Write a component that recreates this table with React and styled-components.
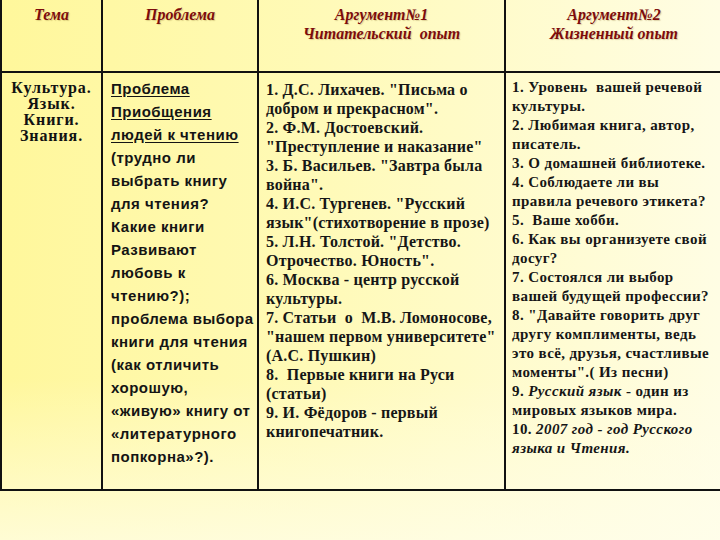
import React from 'react';
import styled, { createGlobalStyle } from 'styled-components';

const GlobalStyle = createGlobalStyle`
    html, body {
        margin: 0;
        padding: 0;
    }
    body {
        width: 720px;
        height: 540px;
        overflow: hidden;
        background:
            linear-gradient(to bottom, rgba(255, 255, 240, 0) 0%, rgba(255, 255, 240, 0) 70%, rgba(255, 254, 236, 0.7) 100%),
            linear-gradient(to right, #fff79b 0%, #fffab8 45%, #fffde4 100%);
        font-family: 'Liberation Serif', 'Times New Roman', serif;
    }
`;

const temaLines = ['Культура.', 'Язык.', 'Книги.', 'Знания.'];

const problemLines = [
    { text: 'Проблема', u: true },
    { text: 'Приобщения', u: true },
    { text: 'людей к чтению', u: true },
    { text: '(трудно ли' },
    { text: 'выбрать книгу' },
    { text: 'для чтения?' },
    { text: 'Какие книги' },
    { text: 'Развивают' },
    { text: 'любовь к' },
    { text: 'чтению?);' },
    { text: 'проблема выбора' },
    { text: 'книги для чтения' },
    { text: '(как отличить' },
    { text: 'хорошую,' },
    { text: '«живую» книгу от' },
    { text: '«литературного' },
    { text: 'попкорна»?).' },
];

const readerLines = [
    '1. Д.С. Лихачев. "Письма о',
    'добром и прекрасном".',
    '2. Ф.М. Достоевский.',
    '"Преступление и наказание"',
    '3. Б. Васильев. "Завтра была',
    'война".',
    '4. И.С. Тургенев. "Русский',
    'язык"(стихотворение в прозе)',
    '5. Л.Н. Толстой. "Детство.',
    'Отрочество. Юность".',
    '6. Москва - центр русской',
    'культуры.',
    '7. Статьи  о  М.В. Ломоносове,',
    '"нашем первом университете"',
    '(А.С. Пушкин)',
    '8.  Первые книги на Руси',
    '(статьи)',
    '9. И. Фёдоров - первый',
    'книгопечатник.',
];

const lifeLines = [
    '1. Уровень  вашей речевой',
    'культуры.',
    '2. Любимая книга, автор,',
    'писатель.',
    '3. О домашней библиотеке.',
    '4. Соблюдаете ли вы',
    'правила речевого этикета?',
    '5.  Ваше хобби.',
    '6. Как вы организуете свой',
    'досуг?',
    '7. Состоялся ли выбор',
    'вашей будущей профессии?',
    '8. "Давайте говорить друг',
    'другу комплименты, ведь',
    'это всё, друзья, счастливые',
    'моменты".( Из песни)',
];

const App = () => {
    return (
        <>
            <GlobalStyle />
            <Table>
                <HeadCell>
                    <HeadLine>Тема</HeadLine>
                </HeadCell>
                <HeadCell>
                    <HeadLine>Проблема</HeadLine>
                </HeadCell>
                <HeadCell>
                    <HeadLine>Аргумент№1</HeadLine>
                    <HeadLine>{'Читательский  опыт'}</HeadLine>
                </HeadCell>
                <HeadCell $last>
                    <HeadLine>Аргумент№2</HeadLine>
                    <HeadLine>Жизненный опыт</HeadLine>
                </HeadCell>

                <TemaCell>
                    {temaLines.map((t) => (
                        <TemaLine key={t}>{t}</TemaLine>
                    ))}
                </TemaCell>
                <ProblemCell>
                    {problemLines.map((l, i) => (
                        <ProblemLine key={i} $u={l.u}>{l.text}</ProblemLine>
                    ))}
                </ProblemCell>
                <ArgCell $pl={7} $pt={7} $size={16} $ls={0.2}>
                    {readerLines.map((t, i) => (
                        <ArgLine key={i}>{t}</ArgLine>
                    ))}
                </ArgCell>
                <ArgCell $pl={6} $pt={5} $size={15} $ls={0.4} $last>
                    {lifeLines.map((t, i) => (
                        <ArgLine key={i}>{t}</ArgLine>
                    ))}
                    <ArgLine>9. <Em>Русский язык</Em> - один из</ArgLine>
                    <ArgLine>мировых языков мира.</ArgLine>
                    <ArgLine>10. <Em>2007 год - год Русского</Em></ArgLine>
                    <ArgLine><Em>языка и Чтения.</Em></ArgLine>
                </ArgCell>
            </Table>
        </>
    );
};

export default App;

const Table = styled.div`
    display: grid;
    grid-template-columns: 101px 156px 247px 1fr;
    grid-template-rows: 73px 418px;
    width: 722px;
    border-left: 2px solid #111;
    box-sizing: border-box;
`;

const Cell = styled.div`
    box-sizing: border-box;
    border-right: ${(p) => (p.$last ? 'none' : '2px solid #111')};
    overflow: hidden;
`;

const HeadCell = styled(Cell)`
    border-bottom: 2px solid #111;
    padding-top: 5px;
    text-align: center;
`;

const HeadLine = styled.div`
    font-family: 'Liberation Serif', 'Times New Roman', serif;
    font-style: italic;
    font-weight: bold;
    font-size: 16px;
    line-height: 19px;
    color: #7d0c0c;
    white-space: pre;
    text-shadow: 1px 1px 1px rgba(120, 90, 20, 0.25);
`;

const TemaCell = styled(Cell)`
    border-bottom: 2px solid #111;
    padding-top: 7px;
    text-align: center;
`;

const TemaLine = styled.div`
    font-family: 'Liberation Serif', 'Times New Roman', serif;
    font-weight: bold;
    font-size: 16px;
    line-height: 16px;
    letter-spacing: 0.9px;
    color: #111;
    white-space: nowrap;
`;

const ProblemCell = styled(Cell)`
    border-bottom: 2px solid #111;
    padding: 4px 0 0 8px;
`;

const ProblemLine = styled.div`
    font-family: 'Liberation Sans', Arial, sans-serif;
    font-weight: bold;
    font-size: 15px;
    line-height: 23px;
    letter-spacing: 0.5px;
    color: #141414;
    white-space: nowrap;
    text-decoration: ${(p) => (p.$u ? 'underline' : 'none')};
    text-underline-offset: 2px;
`;

const ArgCell = styled(Cell)`
    border-bottom: 2px solid #111;
    padding: ${(p) => p.$pt}px 0 0 ${(p) => p.$pl}px;
    font-size: ${(p) => p.$size}px;
    letter-spacing: ${(p) => p.$ls}px;
`;

const ArgLine = styled.div`
    font-family: 'Liberation Serif', 'Times New Roman', serif;
    font-weight: bold;
    line-height: 19px;
    color: #161616;
    white-space: pre;
`;

const Em = styled.span`
    font-style: italic;
`;
